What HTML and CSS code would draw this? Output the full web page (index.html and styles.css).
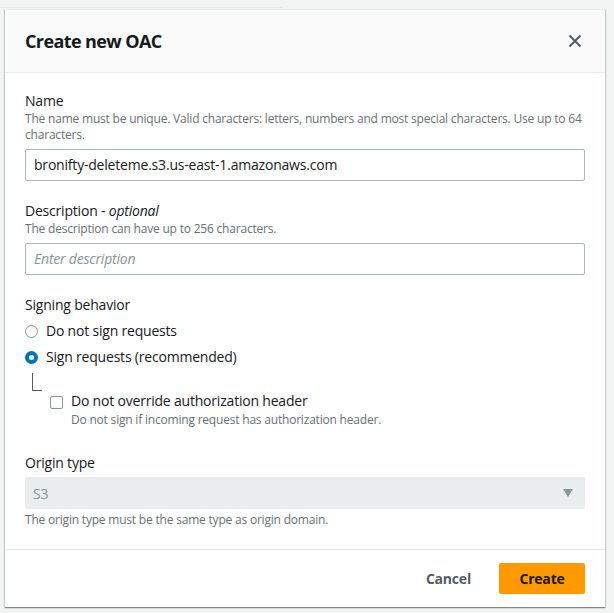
FILE: index.html
```html
<!DOCTYPE html>
<html lang="en">
<head>
<meta charset="utf-8">
<title>Create new OAC</title>
<link rel="stylesheet" href="styles.css">
</head>
<body>
<div class="backdrop">
  <div class="bg-line"></div>
  <div class="modal">
    <div class="modal-header">
      <h2 class="modal-title">Create new OAC</h2>
      <button class="close-btn" aria-label="Close">
        <svg width="14" height="14" viewBox="0 0 14 14"><path d="M1.5 1.5 L12.5 12.5 M12.5 1.5 L1.5 12.5" stroke="#545b64" stroke-width="2" fill="none"/></svg>
      </button>
    </div>
    <div class="modal-body">
      <div class="field">
        <div class="label">Name</div>
        <div class="hint">The name must be unique. Valid characters: letters, numbers and most special characters. Use up to 64 characters.</div>
        <div class="input">bronifty-deleteme.s3.us-east-1.amazonaws.com</div>
      </div>
      <div class="field">
        <div class="label">Description - <i>optional</i></div>
        <div class="hint">The description can have up to 256 characters.</div>
        <div class="input placeholder">Enter description</div>
      </div>
      <div class="field">
        <div class="label">Signing behavior</div>
        <div class="radios">
          <div class="radio-row"><span class="radio"></span><span>Do not sign requests</span></div>
          <div class="radio-row"><span class="radio checked"></span><span>Sign requests (recommended)</span></div>
        </div>
        <div class="tree">
          <div class="tree-line"></div>
          <div class="check-row">
            <span class="checkbox"></span>
            <div class="check-text">
              <div class="check-label">Do not override authorization header</div>
              <div class="hint">Do not sign if incoming request has authorization header.</div>
            </div>
          </div>
        </div>
      </div>
      <div class="field origin">
        <div class="label">Origin type</div>
        <div class="select">
          <span>S3</span>
          <svg width="10" height="8" viewBox="0 0 10 8"><path d="M0 0 H10 L5 8 Z" fill="#879596"/></svg>
        </div>
        <div class="hint below">The origin type must be the same type as origin domain.</div>
      </div>
    </div>
    <div class="modal-footer">
      <button class="btn-link">Cancel</button>
      <button class="btn-primary">Create</button>
    </div>
  </div>
</div>
</body>
</html>
```
FILE: styles.css
```css
* { box-sizing: border-box; }
html, body { margin: 0; padding: 0; }
body {
  background: #f2f3f3;
  font-family: "Open Sans", "Noto Sans", Arial, sans-serif;
  color: #16191f;
  width: 614px;
  height: 613px;
  overflow: hidden;
  letter-spacing: -0.2px;
}
.backdrop {
  position: relative;
  padding: 9px 0 0 5px;
}
.bg-line {
  position: absolute;
  left: 0;
  top: 7px;
  width: 282px;
  height: 1px;
  background: #e4e7e9;
}
.modal {
  position: relative;
  width: 600px;
  background: #fff;
  box-shadow: 0 1px 1px 0 rgba(0,28,36,.3), 1px 1px 1px 0 rgba(0,28,36,.15), -1px 1px 1px 0 rgba(0,28,36,.15);
  border-top: 1px solid #eaeded;
}
.modal-header {
  height: 63px;
  background: #fafafa;
  border-bottom: 1px solid #eaeded;
  display: flex;
  align-items: center;
  justify-content: space-between;
  padding: 0 20px;
}
.modal-title {
  margin: 0;
  font-size: 18px;
  font-weight: 700;
  line-height: 22px;
  letter-spacing: -0.6px;
}
.close-btn {
  border: 0;
  background: none;
  padding: 0;
  width: 16px;
  height: 16px;
  display: flex;
  align-items: center;
  justify-content: center;
  margin-right: 2px;
}
.modal-body {
  padding: 18px 20px 21px;
  display: flex;
  flex-direction: column;
  gap: 20px;
}
.field.origin { margin-top: 5px; }
.label {
  font-size: 14px;
  line-height: 20px;
}
.label i { font-style: italic; }
.hint {
  font-size: 12px;
  line-height: 16px;
  color: #687078;
}
.hint.below { margin-top: 3px; }
.input {
  margin-top: 6px;
  height: 32px;
  border: 1px solid #aab7b8;
  border-radius: 2px;
  padding: 0 8px;
  font-size: 14px;
  line-height: 30px;
}
.input.placeholder {
  color: #879596;
  font-style: italic;
}
.radios {
  margin-top: 3px;
}
.radio-row {
  display: flex;
  align-items: center;
  gap: 8px;
  font-size: 14px;
  line-height: 26px;
}
.radio {
  width: 13px;
  height: 13px;
  border-radius: 50%;
  border: 1.5px solid #879596;
  flex: none;
}
.radio.checked {
  border: 4px solid #0073bb;
}
.tree {
  padding-left: 7px;
}
.tree-line {
  width: 10px;
  height: 18px;
  margin-top: 3px;
  border-left: 1px solid #545b64;
  border-bottom: 1px solid #545b64;
}
.check-row {
  display: flex;
  align-items: flex-start;
  gap: 8px;
  padding-left: 18px;
  margin-top: -1px;
}
.checkbox {
  width: 13px;
  height: 13px;
  border: 1.5px solid #879596;
  border-radius: 2px;
  margin-top: 6px;
  flex: none;
}
.check-label {
  font-size: 14px;
  line-height: 22px;
}
.select {
  margin-top: 4px;
  height: 32px;
  background: #eaeded;
  border-radius: 2px;
  display: flex;
  align-items: center;
  justify-content: space-between;
  padding: 0 12px 0 8px;
  font-size: 14px;
  color: #879596;
}
.modal-footer {
  border-top: 1px solid #eaeded;
  height: 58px;
  display: flex;
  align-items: center;
  justify-content: flex-end;
  padding: 0 20px;
  gap: 8px;
}
.btn-link {
  border: 0;
  background: none;
  font-family: inherit;
  font-size: 14px;
  font-weight: 700;
  color: #545b64;
  padding: 4px 20px;
  letter-spacing: -0.2px;
}
.btn-primary {
  border: 0;
  background: #ff9900;
  border-radius: 2px;
  font-family: inherit;
  font-size: 14px;
  font-weight: 700;
  color: #16191f;
  width: 86px;
  height: 31px;
  padding: 0;
  letter-spacing: -0.2px;
}
```
